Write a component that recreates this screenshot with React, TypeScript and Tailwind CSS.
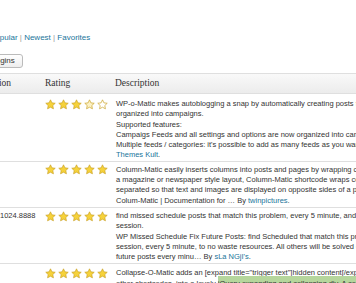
import type { ReactNode } from "react";

type Fill = "full" | "pale" | "empty";

const starFill: Record<Fill, string> = {
  full: "#f6d23a",
  pale: "#fcf1c4",
  empty: "#ffffff",
};

function Star({ fill }: { fill: Fill }) {
  return (
    <svg width="11" height="11" viewBox="0 0 24 24" className="shrink-0">
      <path
        d="M12 1.8l3.1 6.6 7.2.9-5.3 5 1.4 7.1L12 17.9l-6.4 3.5 1.4-7.1-5.3-5 7.2-.9z"
        fill={starFill[fill]}
        stroke="#c9a227"
        strokeWidth="1.5"
        strokeLinejoin="round"
      />
    </svg>
  );
}

function L({ children }: { children: ReactNode }) {
  return <a className="text-[#21759b]">{children}</a>;
}

interface Row {
  version?: string;
  stars: Fill[];
  lines: ReactNode[];
  pad: string;
}

const rows: Row[] = [
  {
    stars: ["full", "full", "full", "pale", "empty"],
    pad: "pt-[5px] pb-0",
    lines: [
      "WP-o-Matic makes autoblogging a snap by automatically creating posts from the RSS/Atom feeds you choose, which are",
      "organized into campaigns.",
      "Supported features:",
      "Campaigs Feeds and all settings and options are now organized into campaigns.",
      "Multiple feeds / categories: it's possible to add as many feeds as you want, and add them to as many categories. By",
      <><L>Themes Kult</L>.</>,
    ],
  },
  {
    stars: ["full", "full", "full", "full", "full"],
    pad: "pt-[3px] pb-[1px]",
    lines: [
      "Column-Matic easily inserts columns into posts and pages by wrapping content in shortcodes. Perfect for",
      "a magazine or newspaper style layout, Column-Matic shortcode wraps columns so that content is",
      "separated so that text and images are displayed on opposite sides of a page.",
      <>Colum-Matic | Documentation for … By <L>twinpictures</L>.</>,
    ],
  },
  {
    version: "1024.8888",
    stars: ["full", "full", "full", "full", "full"],
    pad: "pt-[3px] pb-[1px]",
    lines: [
      "find missed schedule posts that match this problem, every 5 minute, and republish them correctly 10 items per",
      "session.",
      "WP Missed Schedule Fix Future Posts: find Scheduled that match this problem and republish them 10 items per",
      "session, every 5 minute, to no waste resources. All others will be solved on next sessions, to fix all missed",
      <>future posts every minu… By <L>sLa NGjI's</L>.</>,
    ],
  },
  {
    stars: ["full", "full", "full", "full", "full"],
    pad: "pt-[4px] pb-[1px]",
    lines: [
      'Collapse-O-Matic adds an [expand title="trigger text"]hidden content[/expand] shortcode that will wrap any content, including',
      <>
        other shortcodes, into a lovely{" "}
        <span className="bg-[#b5d69c] py-[3px]">jQuery expanding and collapsing div. A complete listing of shortcode options</span>
      </>,
    ],
  },
];

export default function App() {
  return (
    <div className="w-[356px] h-[283px] overflow-hidden bg-white font-['Liberation_Sans',Arial,sans-serif] text-[#333]">
      {/* sub nav */}
      <div className="pt-[32px] -ml-[10px] h-[44px] text-[8px] leading-[12px] whitespace-nowrap">
        <L>Popular</L> <span className="text-[#999]">|</span> <L>Newest</L>{" "}
        <span className="text-[#999]">|</span> <L>Favorites</L>
      </div>

      {/* search button */}
      <div className="mt-[10px] -ml-[47px] flex h-[14px]">
        <button className="flex h-[14px] items-center whitespace-nowrap rounded-[3px] border border-[#bbb] bg-linear-to-b from-white to-[#eee] px-[7px] text-[8px] leading-[10px] text-[#333]">
          Search Plugins
        </button>
      </div>

      {/* plugin table */}
      <div className="mt-[5px] -ml-[25px] w-[700px]">
        <div className="flex h-[21px] items-center border-t border-b border-[#dfdfdf] bg-linear-to-b from-[#f9f9f9] to-[#ececec] font-['Liberation_Serif',serif] text-[9.5px] text-[#333]">
          <div className="w-[63px] shrink-0 pl-[7px]">Version</div>
          <div className="w-[70px] shrink-0 pl-[7px]">Rating</div>
          <div className="flex-1 pl-[7px]">Description</div>
        </div>

        {rows.map((r, i) => (
          <div key={i} className={`flex border-b border-[#dfdfdf] text-[7.5px] leading-[10.3px] ${r.pad}`}>
            <div className="w-[63px] shrink-0 pl-[25px] whitespace-nowrap">{r.version}</div>
            <div className="flex h-[10.3px] w-[70px] shrink-0 items-center gap-[2px] pl-[7px]">
              {r.stars.map((s, j) => (
                <Star key={j} fill={s} />
              ))}
            </div>
            <div className="min-w-0 flex-1 pl-[8px]">
              {r.lines.map((line, j) => (
                <div key={j} className="whitespace-nowrap">
                  {line}
                </div>
              ))}
            </div>
          </div>
        ))}
      </div>
    </div>
  );
}
